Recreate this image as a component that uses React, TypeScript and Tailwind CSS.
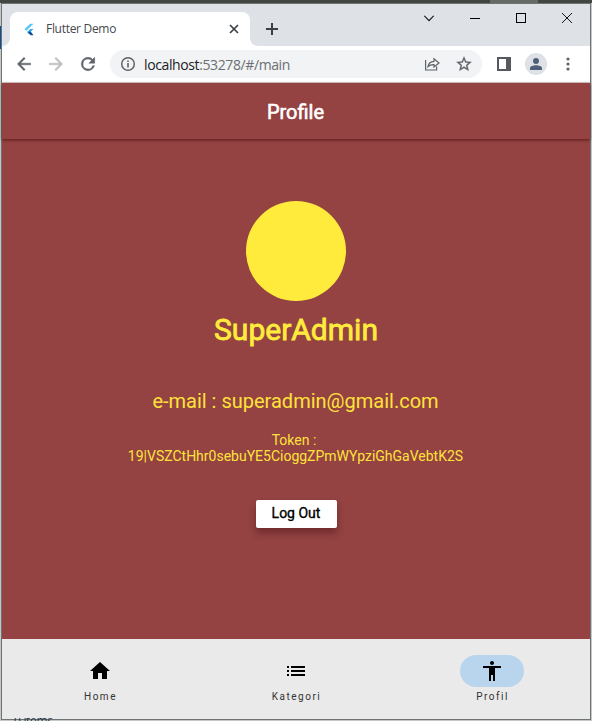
import React from 'react';

const STROKE = { fill: 'none', stroke: 'currentColor' } as const;

function FlutterLogo() {
  return (
    <svg className="ml-[14px] h-[13px] w-[10px] shrink-0" viewBox="0 0 10 13">
      <path d="M6.2 0.8h3.3L2.2 7.8 0.5 6.2z" fill="#54c5f8" />
      <path d="M6.2 6h3.3L7 8.6 4.6 10.8 3 9z" fill="#35a8e8" />
      <path d="M4.5 9.1L6.7 8.6 9.5 12.2H6.6L4.3 10z" fill="#0b4f96" />
    </svg>
  );
}

function TabStrip() {
  return (
    <div className="flex h-[42px] shrink-0 items-start bg-[#dee1e6]">
      <div className="h-[42px] w-2 bg-white">
        <div className="h-full rounded-br-lg bg-[#dee1e6]" />
      </div>
      <div className="h-[42px] w-[240px] bg-[#dee1e6] pt-2">
        <div className="flex h-[34px] items-center rounded-t-lg bg-white">
          <FlutterLogo />
          <span className="ml-3 w-[150px] whitespace-nowrap font-['Open_Sans','Noto_Sans',sans-serif] text-[12px] tracking-[-0.3px] text-[#45494d]">
            Flutter Demo
          </span>
          <svg className="ml-[33px] size-[10px]" viewBox="0 0 10 10" {...STROKE} strokeWidth="1.7">
            <path d="M1 1l8 8M9 1L1 9" className="text-[#3c4043]" />
          </svg>
        </div>
      </div>
      <div className="h-[42px] w-2 bg-white">
        <div className="h-full rounded-bl-lg bg-[#dee1e6]" />
      </div>
      <svg className="mt-[19px] ml-2 size-3 text-[#3c4043]" viewBox="0 0 12 12" {...STROKE} strokeWidth="2">
        <path d="M6 0v12M0 6h12" />
      </svg>
      <div className="mt-[9px] ml-auto flex h-[10px] items-center pr-[18px] text-[#151515]">
        <svg className="h-[7px] w-[10px]" viewBox="0 0 10 7" {...STROKE} strokeWidth="1.2">
          <path d="M0.3 0.8L5 5.6 9.7 0.8" />
        </svg>
        <div className="ml-9 h-px w-[10px] bg-black" />
        <div className="ml-9 size-[10px] border border-black" />
        <svg className="ml-9 size-[10px]" viewBox="0 0 10 10" {...STROKE}>
          <path d="M0 0l10 10M10 0L0 10" />
        </svg>
      </div>
    </div>
  );
}

function Toolbar() {
  return (
    <div className="flex h-9 shrink-0 items-center bg-white text-[#5f6368]">
      <svg className="ml-3 size-5" viewBox="0 0 24 24" fill="currentColor" stroke="currentColor" strokeWidth="0.5">
        <path d="M20 11H7.83l5.59-5.59L12 4l-8 8 8 8 1.41-1.41L7.83 13H20v-2z" />
      </svg>
      <svg className="ml-3 size-5 text-[#bbbdbf]" viewBox="0 0 24 24" fill="currentColor" stroke="currentColor" strokeWidth="0.5">
        <path d="M12 4l-1.41 1.41L16.17 11H4v2h12.17l-5.58 5.59L12 20l8-8z" />
      </svg>
      <svg className="ml-3 size-5" viewBox="0 0 24 24" fill="currentColor" stroke="currentColor" strokeWidth="0.6">
        <path d="M17.65 6.35A7.96 7.96 0 0 0 12 4a8 8 0 1 0 7.73 10h-2.08A6 6 0 1 1 12 6c1.66 0 3.14.69 4.22 1.78L13 11h7V4l-2.35 2.35z" />
      </svg>
      <div className="ml-3 flex h-7 w-[372px] items-center rounded-full bg-[#f1f3f4]">
        <svg className="ml-[10px] size-4" viewBox="0 0 16 16">
          <circle cx="8" cy="8" r="6.3" {...STROKE} strokeWidth="1.5" />
          <path d="M7.2 7h1.6v4.5H7.2zM7.2 4.4h1.6V6H7.2z" fill="currentColor" />
        </svg>
        <span className="ml-2 whitespace-nowrap font-['Open_Sans','Noto_Sans',sans-serif] text-[14px] tracking-[-0.39px] text-[#6b6f73]">
          <span className="text-[#202124]">localhost</span>:53278/#/main
        </span>
        <svg className="mr-[15px] ml-auto size-4" viewBox="0 0 16 16" {...STROKE} strokeWidth="1.2">
          <path d="M1.6 4v10h11v-3.5M4 10.5c.6-3.5 2.6-5 6-5.2V2.7L15 7l-5 4V8.6c-2.7-.1-4.5.4-6 1.9z" />
        </svg>
        <svg className="mr-[9px] size-[18px]" viewBox="0 0 24 24" fill="currentColor" stroke="currentColor" strokeWidth="0.4">
          <path d="M22 9.24l-7.19-.62L12 2 9.19 8.63 2 9.24l5.46 4.73L5.82 21 12 17.27 18.18 21l-1.63-7.03L22 9.24zM12 15.4l-3.76 2.27 1-4.28-3.32-2.88 4.38-.38L12 6.1l1.71 4.04 4.38.38-3.32 2.88 1 4.28L12 15.4z" />
        </svg>
      </div>
      <div className="ml-[15px] h-[14px] w-[14px] border-2 border-r-[5px] border-[#55585d]" />
      <div className="ml-[14px] flex size-[22px] items-center justify-center rounded-full bg-[#dee1e6]">
        <svg className="size-3 text-[#50607a]" viewBox="0 0 12 12" fill="currentColor">
          <circle cx="6" cy="3" r="3" />
          <path d="M0 12V10.2C0 8.2 3.5 7.3 6 7.3s6 .9 6 2.9V12z" />
        </svg>
      </div>
      <svg className="ml-[19px] h-[14px] w-1" viewBox="0 0 4 14" fill="currentColor">
        <circle cx="2" cy="2" r="1.6" />
        <circle cx="2" cy="7" r="1.6" />
        <circle cx="2" cy="12" r="1.6" />
      </svg>
    </div>
  );
}

function Destination({ label, path, active = false }: { label: string; path: string; active?: boolean }) {
  return (
    <div className="flex flex-1 flex-col items-center pt-4">
      <div className={active ? 'flex h-8 w-16 items-center justify-center rounded-full bg-[#b9d5ed]' : 'flex h-8 w-16 items-center justify-center'}>
        <svg className="size-6" viewBox="0 0 24 24" fill="black">
          <path d={path} />
        </svg>
      </div>
      <span className="mt-1 ml-px text-[10px] leading-3 tracking-[1.5px] text-[#333]">{label}</span>
    </div>
  );
}

export default function App() {
  return (
    <div className="relative flex h-[721px] w-[592px] flex-col overflow-hidden bg-[#c4c9c7] font-['Roboto',sans-serif]">
      <div className="flex h-[3px] shrink-0 justify-end bg-[#444644] pr-[54px]">
        <div className="w-12 bg-[#666966]" />
      </div>
      <div className="flex h-[717px] shrink-0">
        <div className="w-px shrink-0 pt-[23px]">
          <div className="h-[23px] bg-[#075096]" />
        </div>
        <div className="flex h-[717px] w-[590px] flex-col border border-[#707373]">
          <TabStrip />
          <Toolbar />
          <div className="h-px shrink-0 bg-[#ddd2d2]" />
          <header className="z-10 flex h-14 shrink-0 items-center justify-center bg-[#944242] shadow-[0_1px_3px_rgba(60,0,0,0.65)]">
            <h1 className="pt-[2px] pr-px text-[20px] font-normal text-white [-webkit-text-stroke:0.6px_white]">Profile</h1>
          </header>
          <main className="flex min-h-0 flex-1 flex-col items-center bg-[#944242] pt-[62.4px] text-[#ffeb3b]">
            <div className="size-[100px] rounded-full bg-[#ffeb3b]" />
            <h2 className="mt-[10.6px] text-[30px] leading-[35px] font-normal [-webkit-text-stroke:0.8px_#ffeb3b]">SuperAdmin</h2>
            <p className="mt-[42px] pr-px text-[20px] leading-6 text-[#ffe23b]">e-mail : superadmin@gmail.com</p>
            <p className="mt-[19px] pr-px text-center text-[14px] leading-4 text-[#ffe23b]">
              <span className="pr-[3px]">Token :</span><br />19|VSZCtHhr0sebuYE5CioggZPmWYpziGhGaVebtK2S
            </p>
            <button className="mt-9 h-7 w-[81px] rounded-[2px] bg-white text-[14px] text-black shadow-[0_5px_7px_rgba(50,0,0,0.35)] [-webkit-text-stroke:0.35px_black]">
              Log Out
            </button>
          </main>
          <nav className="flex h-20 shrink-0 bg-[#eaeaea]">
            <Destination label="Home" path="M10 20v-6h4v6h5v-8h3L12 3 2 12h3v8z" />
            <Destination label="Kategori" path="M3 13h2v-2H3v2zm0 4h2v-2H3v2zm0-8h2V7H3v2zm4 4h14v-2H7v2zm0 4h14v-2H7v2zM7 7v2h14V7H7z" />
            <Destination active label="Profil" path="M12 2c1.1 0 2 .9 2 2s-.9 2-2 2-2-.9-2-2 .9-2 2-2zm9 7h-6v13h-2v-6h-2v6H9V9H3V7h18v2z" />
          </nav>
        </div>
      </div>
      {/* Status text of the window behind, cut off by the screen edge */}
      <div className="absolute bottom-0 left-[14px] h-[3px] overflow-hidden font-['Open_Sans',sans-serif] text-[12px] leading-3 tracking-[-0.3px] whitespace-pre text-[#26384a]">
        <span className="-mt-[3px] block">0 items</span>
      </div>
    </div>
  );
}
